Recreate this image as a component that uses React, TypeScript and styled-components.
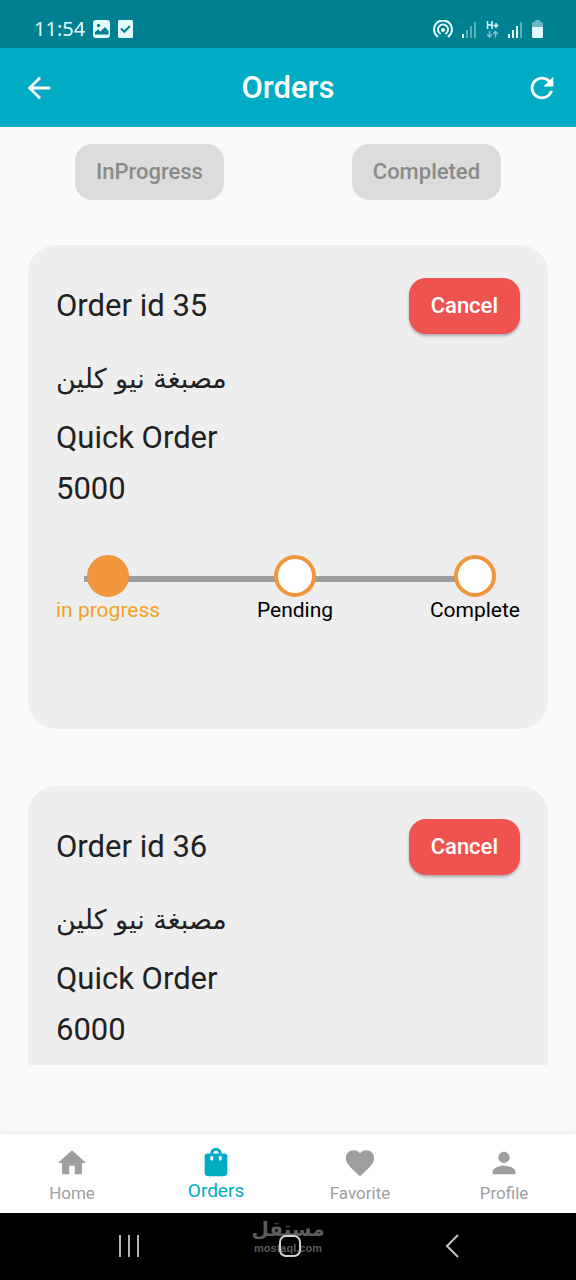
import React from "react";
import styled, { createGlobalStyle } from "styled-components";
import {
  MdArrowBack,
  MdFavorite,
  MdHome,
  MdPerson,
  MdRefresh,
  MdShoppingBag,
} from "react-icons/md";

const GlobalStyle = createGlobalStyle`
  * { box-sizing: border-box; }
  body {
    margin: 0;
    background: #fafafa;
    color: #212121;
    font-family: Roboto, "DejaVu Sans", sans-serif;
  }
  button { font-family: inherit; border: 0; padding: 0; }
  svg { display: block; }
`;

const Screen = styled.div`
  display: flex;
  flex-direction: column;
  height: 100vh;
`;

const StatusBar = styled.div`
  display: flex;
  align-items: center;
  justify-content: space-between;
  flex: none;
  padding: 10px 33px 0 34px;
  height: 48px;
  background: #008191;
  color: #e4fbfd;
`;

const StatusGroup = styled.div<{ $gap: number }>`
  display: flex;
  align-items: center;
  gap: ${(p) => p.$gap}px;
`;

const Clock = styled.time`
  font: 400 20px/24px "Noto Sans", sans-serif;
`;

const AppBar = styled.header`
  display: grid;
  grid-template-columns: 1fr auto 1fr;
  align-items: center;
  flex: none;
  height: 79px;
  padding: 0 17px;
  background: #00acc4;
  color: #fff;
`;

const Title = styled.h1`
  margin: 0;
  font-size: 31px;
  line-height: 36px;
  font-weight: 500;
`;

const IconButton = styled.button<{ $end?: boolean }>`
  justify-self: ${(p) => (p.$end ? "end" : "start")};
  padding-left: 5px;
  background: none;
  color: inherit;
  font-size: 34px;
  cursor: pointer;
`;

const Main = styled.main`
  flex: 1;
  min-height: 0;
  display: flex;
  flex-direction: column;
  padding-bottom: 69px;
`;

const Filters = styled.div`
  display: flex;
  justify-content: space-around;
  flex: none;
  padding: 17px 11px 45px;
`;

const Button = styled.button`
  height: 56px;
  padding: 0 22px;
  border-radius: 17px;
  font-size: 22px;
  line-height: 26px;
  font-weight: 500;
`;

const FilterButton = styled(Button)`
  padding: 0 21px;
  background: #dcdcdc;
  color: #8a8a8a;
`;

const CancelButton = styled(Button)`
  background: #ef5350;
  color: #fff;
  box-shadow: 0 2px 3px rgba(0, 0, 0, 0.28);
  cursor: pointer;
`;

const OrderList = styled.div`
  flex: 1;
  min-height: 0;
  display: flex;
  flex-direction: column;
  gap: 57px;
  padding: 0 28px;
  overflow-y: auto;
  scrollbar-width: none;
`;

const OrderCard = styled.article`
  flex: none;
  min-height: 484px;
  padding: 33px 28px 106px;
  border-radius: 28px;
  background: #eee;
`;

const CardHeader = styled.div`
  display: flex;
  align-items: center;
  justify-content: space-between;
`;

const OrderTitle = styled.h2`
  margin: 0;
  font-size: 31px;
  line-height: 36px;
  font-weight: 400;
`;

const Details = styled.div`
  display: flex;
  flex-direction: column;
  align-items: flex-start;
  gap: 15px;
  margin: 24px 0 48px;
`;

const Detail = styled.p`
  margin: 0;
  font-size: 31px;
  line-height: 36px;
`;

const ShopName = styled(Detail)`
  margin-bottom: 5px;
  font-family: "DejaVu Sans", sans-serif;
  font-size: 27px;
  line-height: 42px;
`;

const Steps = styled.ol`
  position: relative;
  display: flex;
  justify-content: space-between;
  margin: 0;
  padding: 0;
  list-style: none;
`;

const Track = styled.li`
  position: absolute;
  top: 21px;
  left: 28px;
  right: 28px;
  height: 6px;
  background: #9e9e9e;
`;

const Step = styled.li<{ $active?: boolean }>`
  position: relative;
  display: flex;
  flex-direction: column;
  align-items: center;
  font-size: 21px;
  line-height: 26px;
  color: ${(p) => (p.$active ? "#f2a01e" : "#000")};
`;

const StepDot = styled.span<{ $active?: boolean }>`
  width: 42px;
  height: 42px;
  border: 4px solid #f0963c;
  border-radius: 50%;
  background: ${(p) => (p.$active ? "#f0963c" : "#fff")};
`;

const BottomNav = styled.nav`
  display: grid;
  grid-template-columns: repeat(4, 1fr);
  flex: none;
  height: 79px;
  background: #fff;
  box-shadow: 0 -1px 5px rgba(0, 0, 0, 0.1);
`;

const NavLink = styled.a<{ $active?: boolean }>`
  display: flex;
  flex-direction: column;
  align-items: center;
  padding-top: ${(p) => (p.$active ? 11 : 12)}px;
  color: ${(p) => (p.$active ? "#00acc1" : "#9e9e9e")};
  font-size: ${(p) => (p.$active ? 19 : 17)}px;
  line-height: ${(p) => (p.$active ? 24 : 26)}px;
  text-decoration: none;

  svg { font-size: 34px; }
`;

const SystemBar = styled.div`
  position: relative;
  display: grid;
  grid-template-columns: repeat(3, 1fr);
  align-items: center;
  justify-items: center;
  flex: none;
  height: 67px;
  padding: 0 43px 2px 48px;
  background: #000;
`;

const SystemButton = styled.button`
  position: relative;
  background: none;
`;

const Watermark = styled.div`
  position: absolute;
  top: 3px;
  left: 0;
  right: 0;
  display: flex;
  flex-direction: column;
  align-items: center;
  color: #5c5c5c;
`;

const WatermarkName = styled.span`
  font: 700 20px/26px "DejaVu Sans", sans-serif;
`;

const WatermarkSite = styled.span`
  font: 700 11px/12px "Liberation Sans", sans-serif;
`;

const PictureIcon = () => (
  <svg width="17" height="18" viewBox="0 0 17 18" aria-hidden="true">
    <rect width="17" height="18" rx="3" fill="currentColor" />
    <circle cx="5.5" cy="5.5" r="1.7" fill="#008191" />
    <path d="M2 14.5V12l3-2.5 2.5 2 4.5-4.5 3.5 4v3.5z" fill="#008191" />
  </svg>
);

const TaskIcon = () => (
  <svg width="15" height="18" viewBox="0 0 15 18" aria-hidden="true">
    <rect width="15" height="18" rx="1.5" fill="currentColor" />
    <path d="M3 8.500l3.300 3.300L12 6" fill="none" stroke="#008191" strokeWidth="2" />
  </svg>
);

const HotspotIcon = () => (
  <svg width="20" height="18" viewBox="0 0 20 18" fill="none" stroke="currentColor" strokeWidth="2" strokeLinecap="round" aria-hidden="true">
    <path d="M4.500 16.500a9 9 0 1 1 11 0" />
    <path d="M7 13.500a5 5 0 1 1 6 0" />
    <circle cx="10" cy="10" r="2" fill="currentColor" stroke="none" />
  </svg>
);

const SignalIcon = ({ level }: { level: number }) => (
  <svg width="15" height="17" viewBox="0 0 15 17" fill="currentColor" aria-hidden="true">
    {[4, 8, 12, 16].map((h, i) => (
      <rect key={h} x={i * 4} y={17 - h} width="2" height={h} opacity={i < level ? 1 : 0.4} />
    ))}
  </svg>
);

const DataIcon = () => (
  <svg width="13" height="17" viewBox="0 0 13 17" fill="none" stroke="currentColor" strokeWidth="1.5" aria-hidden="true">
    <path d="M1.500 0v8M6 0v8M1.500 4H6M7.500 4.500h5M10 2v5" />
    <path d="M3.500 10v6M1 13.500L3.500 16 6 13.500M9.500 16.500v-6M7 13l2.500-2.500L12 13" opacity=".55" />
  </svg>
);

const BatteryIcon = () => (
  <svg width="11" height="18" viewBox="0 0 11 18" fill="currentColor" aria-hidden="true">
    <path d="M3 0h5v2h1.500Q11 2 11 3.500V7H0V3.500Q0 2 1.500 2H3z" opacity=".45" />
    <path d="M0 7h11v9.500Q11 18 9.500 18h-8Q0 18 0 16.500z" />
  </svg>
);

type Order = {
  id: number;
  shop: string;
  type: string;
  price: number;
  stages?: string[];
};

const orders: Order[] = [
  {
    id: 35,
    shop: "مصبغة نيو كلين",
    type: "Quick Order",
    price: 5000,
    stages: ["in progress", "Pending", "Complete"],
  },
  { id: 36, shop: "مصبغة نيو كلين", type: "Quick Order", price: 6000 },
];

const tabs = [
  { label: "Home", Icon: MdHome },
  { label: "Orders", Icon: MdShoppingBag },
  { label: "Favorite", Icon: MdFavorite },
  { label: "Profile", Icon: MdPerson },
];

export default function App() {
  return (
    <Screen>
      <GlobalStyle />
      <StatusBar>
        <StatusGroup $gap={8}>
          <Clock>11:54</Clock>
          <PictureIcon />
          <TaskIcon />
        </StatusGroup>
        <StatusGroup $gap={9}>
          <HotspotIcon />
          <SignalIcon level={1} />
          <DataIcon />
          <SignalIcon level={3} />
          <BatteryIcon />
        </StatusGroup>
      </StatusBar>
      <AppBar>
        <IconButton type="button" aria-label="Back">
          <MdArrowBack />
        </IconButton>
        <Title>Orders</Title>
        <IconButton type="button" aria-label="Refresh" $end>
          <MdRefresh />
        </IconButton>
      </AppBar>
      <Main>
        <Filters>
          <FilterButton type="button" disabled>InProgress</FilterButton>
          <FilterButton type="button" disabled>Completed</FilterButton>
        </Filters>
        <OrderList>
          {orders.map((order) => (
            <OrderCard key={order.id}>
              <CardHeader>
                <OrderTitle>Order id {order.id}</OrderTitle>
                <CancelButton type="button">Cancel</CancelButton>
              </CardHeader>
              <Details>
                <ShopName lang="ar" dir="rtl">{order.shop}</ShopName>
                <Detail>{order.type}</Detail>
                <Detail>{order.price}</Detail>
              </Details>
              {order.stages && (
                <Steps>
                  <Track aria-hidden="true" />
                  {order.stages.map((label, i) => (
                    <Step key={label} $active={i === 0}>
                      <StepDot $active={i === 0} />
                      {label}
                    </Step>
                  ))}
                </Steps>
              )}
            </OrderCard>
          ))}
        </OrderList>
      </Main>
      <BottomNav>
        {tabs.map(({ label, Icon }) => (
          <NavLink key={label} href="#" $active={label === "Orders"}>
            <Icon />
            {label}
          </NavLink>
        ))}
      </BottomNav>
      <SystemBar>
        <Watermark>
          <WatermarkName lang="ar">مستقل</WatermarkName>
          <WatermarkSite>mostaql.com</WatermarkSite>
        </Watermark>
        <SystemButton type="button" aria-label="Recent apps">
          <svg width="22" height="22" viewBox="0 0 22 22" stroke="#b4b4b4" strokeWidth="2">
            <path d="M2 0v22M11 0v22M20 0v22" />
          </svg>
        </SystemButton>
        <SystemButton type="button" aria-label="Home screen">
          <svg width="22" height="22" viewBox="0 0 22 22" fill="none" stroke="#d0d0d0" strokeWidth="2">
            <rect x="1" y="1" width="20" height="20" rx="6" />
          </svg>
        </SystemButton>
        <SystemButton type="button" aria-label="Go back">
          <svg width="14" height="24" viewBox="0 0 14 24" fill="none" stroke="#c4c4c4" strokeWidth="2">
            <path d="M13 1L2 12l11 11" />
          </svg>
        </SystemButton>
      </SystemBar>
    </Screen>
  );
}
